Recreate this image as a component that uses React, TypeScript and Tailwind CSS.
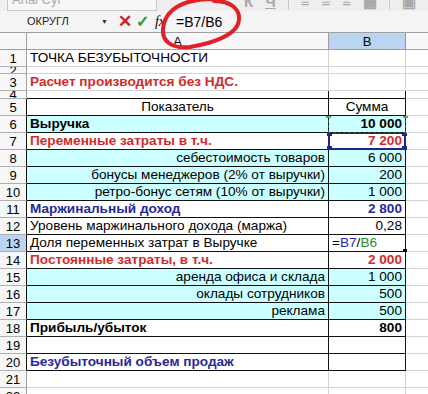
import React from 'react';

type Row = {
  n: number;
  h: string;
  a?: React.ReactNode;
  b?: React.ReactNode;
  aCls?: string;
  bCls?: string;
  bAlign?: string;
  fill?: boolean;
  table?: boolean;
  edge?: boolean;
};

const RED = 'text-[#d22b2b] font-bold';
const NAVY = 'text-[#28289a] font-bold';

const rows: Row[] = [
  { n: 1, h: 'h-[17px]', a: 'ТОЧКА БЕЗУБЫТОЧНОСТИ' },
  { n: 2, h: 'h-[7px]' },
  { n: 3, h: 'h-[17px]', a: 'Расчет производится без НДС.', aCls: RED },
  { n: 4, h: 'h-[8px]', edge: true },
  { n: 5, h: 'h-[17px]', table: true, a: 'Показатель', b: 'Сумма', aCls: 'justify-center', bAlign: 'justify-center' },
  { n: 6, h: 'h-[17px]', table: true, fill: true, a: 'Выручка', b: '10 000', aCls: 'font-bold', bCls: 'font-bold' },
  { n: 7, h: 'h-[17px]', table: true, a: 'Переменные затраты в т.ч.', b: '7 200', aCls: RED, bCls: RED },
  { n: 8, h: 'h-[17px]', table: true, fill: true, a: 'себестоимость товаров', b: '6 000', aCls: 'justify-end' },
  { n: 9, h: 'h-[17px]', table: true, fill: true, a: 'бонусы менеджеров (2% от выручки)', b: '200', aCls: 'justify-end' },
  { n: 10, h: 'h-[17px]', table: true, fill: true, a: 'ретро-бонус сетям (10% от выручки)', b: '1 000', aCls: 'justify-end' },
  { n: 11, h: 'h-[17px]', table: true, a: 'Маржинальный доход', b: '2 800', aCls: NAVY, bCls: NAVY },
  { n: 12, h: 'h-[17px]', table: true, a: 'Уровень маржинального дохода (маржа)', b: '0,28' },
  {
    n: 13,
    h: 'h-[17px]',
    table: true,
    a: 'Доля переменных затрат в Выручке',
    b: (
      <span>
        =<span className="text-[#2a2ab0]">B7</span>/<span className="text-[#2e8b2e]">B6</span>
      </span>
    ),
    bAlign: 'justify-start',
  },
  { n: 14, h: 'h-[17px]', table: true, a: 'Постоянные затраты, в т.ч.', b: '2 000', aCls: RED, bCls: RED },
  { n: 15, h: 'h-[17px]', table: true, fill: true, a: 'аренда офиса и склада', b: '1 000', aCls: 'justify-end' },
  { n: 16, h: 'h-[17px]', table: true, fill: true, a: 'оклады сотрудников', b: '500', aCls: 'justify-end' },
  { n: 17, h: 'h-[17px]', table: true, fill: true, a: 'реклама', b: '500', aCls: 'justify-end' },
  { n: 18, h: 'h-[17px]', table: true, a: 'Прибыль/убыток', b: '800', aCls: 'font-bold', bCls: 'font-bold' },
  { n: 19, h: 'h-[17px]', table: true },
  { n: 20, h: 'h-[17px]', table: true, a: 'Безубыточный объем продаж', aCls: NAVY },
  { n: 21, h: 'h-[17px]' },
  { n: 22, h: 'h-[17px]' },
];

const Corner = ({ cls }: { cls: string }) => <div className={`absolute w-[5px] h-[5px] ${cls}`} />;

const SheetRow = ({ r }: { r: Row }) => {
  const line = r.table || r.edge ? 'border-[#111]' : 'border-[#d4d4d4]';
  const bg = r.fill ? 'bg-[#ccffff]' : 'bg-white';
  const active = r.n === 13;
  return (
    <div className={`flex ${r.h} overflow-hidden`}>
      <div
        className={`w-[27px] shrink-0 overflow-hidden flex items-center justify-center text-[13px] border-b border-b-[#b0b0b0] border-r ${
          r.table ? 'border-r-[#111]' : 'border-r-[#a0a0a0]'
        } ${active ? 'bg-[#b9d5f2]' : 'bg-[#f7f7f7]'}`}
      >
        {r.n}
      </div>
      <div className={`w-[302px] shrink-0 flex items-center px-[3px] whitespace-nowrap border-r border-b ${line} ${bg} ${r.aCls ?? ''}`}>
        {r.a}
      </div>
      <div
        className={`relative w-[77px] shrink-0 flex items-center ${r.bAlign ?? 'justify-end'} px-[3px] whitespace-nowrap border-r border-b ${line} ${bg} ${r.bCls ?? ''}`}
      >
        {r.b}
        {r.n === 6 && (
          <>
            <div className="absolute inset-[-1px] border border-dashed border-[#2f4f3f]" />
            <Corner cls="left-[-3px] top-[-3px] bg-[#5aa35a]" />
            <Corner cls="right-[-3px] top-[-3px] bg-[#5aa35a]" />
          </>
        )}
        {r.n === 7 && (
          <>
            <div className="absolute inset-[-1px] border-2 border-[#22228a]" />
            <Corner cls="left-[-2px] top-[-2px] bg-[#22228a]" />
            <Corner cls="right-[-2px] top-[-2px] bg-[#22228a]" />
            <Corner cls="left-[-2px] bottom-[-2px] bg-[#22228a]" />
            <Corner cls="right-[-2px] bottom-[-2px] bg-[#22228a]" />
          </>
        )}
        {active && <div className="absolute right-[-2px] bottom-[-2px] w-[4px] h-[4px] bg-black" />}
      </div>
      <div className="flex-1 border-b border-[#d4d4d4] bg-white" />
    </div>
  );
};

export default function App() {
  return (
    <div
      className="relative w-[428px] h-[394px] overflow-hidden bg-white text-[13.6px] leading-none text-black"
      style={{ fontFamily: '"Liberation Sans", Arial, sans-serif' }}
    >
      {/* toolbar, cut off at the top */}
      <div className="h-[11px] bg-[#eeeeee] overflow-hidden relative">
        <div className="absolute left-[7px] top-[-10px] w-[150px] h-[21px] border border-[#c8c8c8] bg-[#f7f7f7] flex items-end pb-[4px] pl-[4px] text-[13px] text-[#a8a8a8]">
          Arial Cyr
        </div>
        <div className="absolute left-[244px] top-[-8px] flex items-center gap-[12px] text-[15px] text-[#a8a8a8] font-bold">
          <span>К</span>
          <span className="underline">Ч</span>
          <span className="w-px h-[18px] bg-[#c8c8c8]" />
          <span>≡</span>
          <span>≡</span>
          <span>≡</span>
          <span>▦</span>
          <span className="w-px h-[18px] bg-[#c8c8c8]" />
          <span>▣</span>
          <span>%</span>
        </div>
      </div>

      {/* formula bar */}
      <div className="h-[21px] bg-[#f4f4f4] flex items-center">
        <span className="ml-[27px] w-[74px] text-[11px] text-[#222]">ОКРУГЛ</span>
        <span className="text-[7px] text-[#333]">▼</span>
        <span className="ml-[10px] text-[17px] font-bold text-[#d42020]">✕</span>
        <span className="ml-[4px] text-[16px] font-bold text-[#2e9a2e]">✓</span>
        <span className="ml-[6px] text-[14px] italic" style={{ fontFamily: '"Liberation Serif", serif' }}>
          fx
        </span>
        <span className="ml-[11px] text-[14px]">=B7/B6</span>
      </div>

      {/* column headers */}
      <div className="flex h-[18px] border-t border-[#a0a0a0] text-[13px]">
        <div className="w-[27px] shrink-0 bg-[#f7f7f7] border-r border-b border-[#a0a0a0]" />
        <div className="w-[302px] shrink-0 bg-[#f7f7f7] border-r border-b border-[#a0a0a0] flex items-center justify-center">A</div>
        <div className="w-[77px] shrink-0 bg-[#b9d5f2] border-r border-b border-r-[#7f98b4] border-b-[#a0a0a0] flex items-center justify-center">B</div>
        <div className="flex-1 bg-[#f7f7f7] border-b border-[#a0a0a0]" />
      </div>

      {rows.map((r) => (
        <SheetRow key={r.n} r={r} />
      ))}

      {/* hand-drawn red oval */}
      <svg className="absolute left-0 top-0 pointer-events-none" width="428" height="394">
        <path
          d="M 214 1 C 234 1 242 12 238 24 C 234 35 214 43 190 47 C 171 49 162 41 163 29 C 164 14 176 3 198 0 C 210 -2 222 0 231 5"
          fill="none"
          stroke="#e2202a"
          strokeWidth="4"
          strokeLinecap="round"
        />
      </svg>
    </div>
  );
}
